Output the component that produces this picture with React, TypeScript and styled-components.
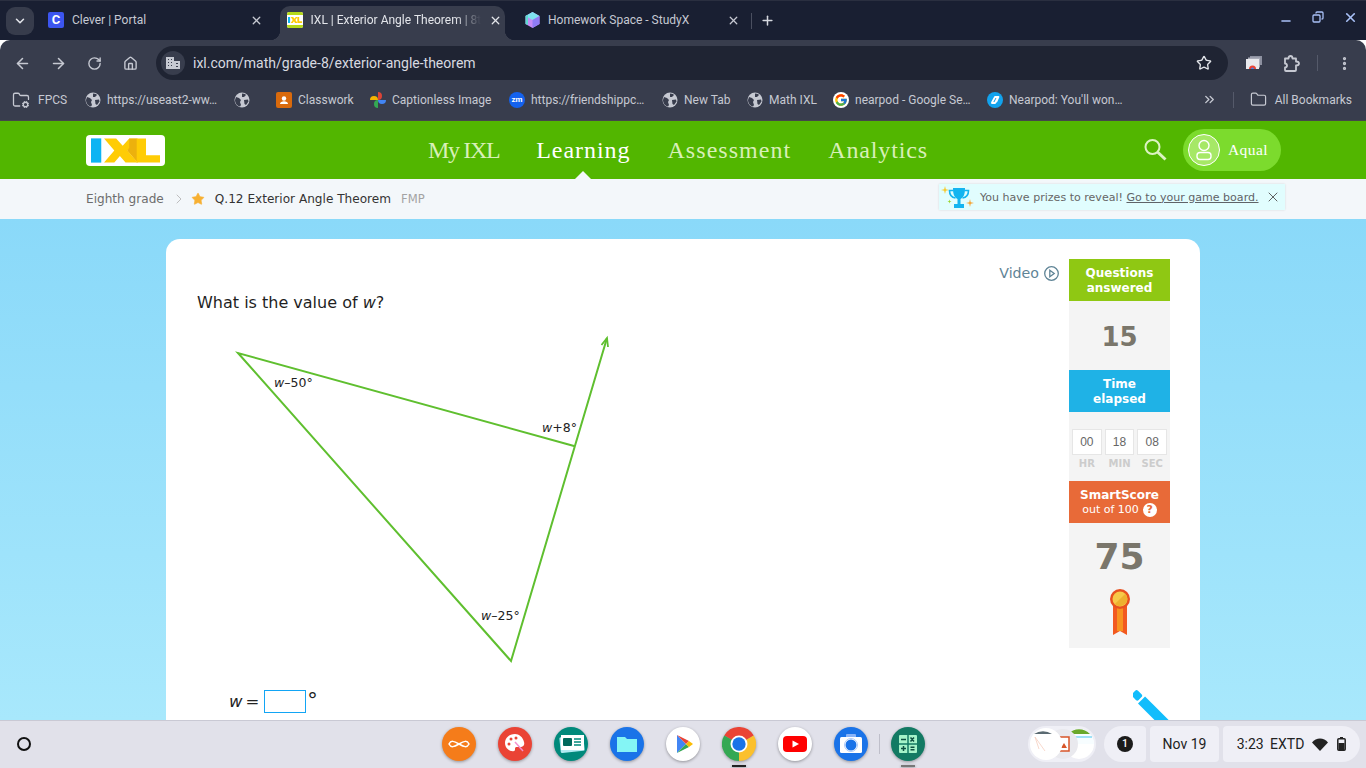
import React from "react";
import styled, { createGlobalStyle } from "styled-components";
import { ArrowLeft, ArrowRight, RotateCw, Home, Star, EllipsisVertical, X, Plus, Minus, ChevronDown, ChevronsRight, ChevronRight, Folder, FolderCog, Copy } from "lucide-react";
import { FcGoogle } from "react-icons/fc";

const Global = createGlobalStyle`
  html, body { margin: 0; padding: 0; overflow: hidden; background: #fff; }
  * { box-sizing: border-box; }
`;

const Screen = styled.div`
  width: 1366px; height: 768px; display: flex; flex-direction: column; overflow: hidden;
  font-family: Roboto, "Liberation Sans", sans-serif;
`;
const TabStrip = styled.div`
  height: 40px; flex: none; background: #191f32; border-top: 1px solid #2a2f40; display: flex; align-items: flex-end; padding-left: 6px; color: #c6c9d2;
`;
const TabMenu = styled.div`
  width: 28px; height: 28px; margin: 0 7px 5px 0; border-radius: 9px; background: #373c4c; display: flex; align-items: center; justify-content: center; color: #e3e5ea;
`;
const Tab = styled.div<{ $active?: boolean }>`
  position: relative; width: 225px; height: 34px; margin-right: 13.5px; padding: 0 3px 6px 7px; display: flex; align-items: center; gap: 8px; font-size: 12px; color: ${p => (p.$active ? "#e3e5ea" : "#c6c9d2")};
  background: ${p => (p.$active ? "#383d4d" : "transparent")}; border-radius: 10px 10px 0 0;
  ${p => p.$active && `
    &::before, &::after { content: ""; position: absolute; bottom: 0; width: 10px; height: 10px; }
    &::before { left: -10px; background: radial-gradient(circle at 0 0, transparent 10px, #383d4d 10.5px); }
    &::after { right: -10px; background: radial-gradient(circle at 100% 0, transparent 10px, #383d4d 10.5px); }
  `}
`;
const TabTitle = styled.span<{ $fade?: boolean }>`
  flex: 1; white-space: nowrap; overflow: hidden;
  ${p => p.$fade && `-webkit-mask-image: linear-gradient(90deg, #000 85%, transparent 100%);`}
`;
const Favicon = styled.span<{ $bg: string }>`
  width: 16px; height: 16px; flex: none; background: ${p => p.$bg}; border-radius: 2px; color: #fff; font: 700 13px/16px Roboto, sans-serif; text-align: center; display: inline-flex; align-items: center; justify-content: center; overflow: hidden;
`;
const TabDivider = styled.span`
  width: 1px; height: 16px; background: #4a4f60; margin: 0 8px 11px -5.5px;
`;
const NewTab = styled.div`
  margin-bottom: 12px; display: flex; color: #d5d8df;
`;
const WindowControls = styled.div`
  margin-left: auto; display: flex; gap: 16px; padding: 0 8px 15px 0; color: #a9c1f7;
`;
const WindowControl = styled.span`
  width: 16px; height: 16px; display: flex; align-items: center; justify-content: center;
`;
const Toolbar = styled.div`
  height: 41px; flex: none; background: #383d4d; border-radius: 10px 10px 0 0; display: flex; align-items: flex-start; padding: 6px 0 0 4px; color: #c6c9d2;
`;
const NavButton = styled.div`
  width: 36px; height: 34px; display: flex; align-items: center; justify-content: center;
`;
const AddressBar = styled.div`
  margin-left: 8px; width: 1072px; height: 34px; border-radius: 17px; background: #1f2433; display: flex; align-items: center; padding: 0 16px 0 5px; color: #d8dae0; font-size: 14px;
`;
const SiteBadge = styled.span`
  width: 24px; height: 24px; border-radius: 50%; background: #383d4d; display: flex; align-items: center; justify-content: center; margin-right: 8px;
`;
const UrlText = styled.span`
  flex: 1; padding-bottom: 1px;
`;
const ToolbarEnd = styled.div`
  display: flex; align-items: center; height: 34px; padding-left: 17px;
`;
const ToolbarIcon = styled.span<{ $w: number }>`
  width: ${p => p.$w}px; display: flex; justify-content: center; align-items: center;
`;
const ToolbarSep = styled.span`
  width: 1px; height: 16px; background: #555a6a; margin: 0 17px 0 -2px;
`;
const Bookmarks = styled.div`
  height: 40px; flex: none; background: #383d4d; display: flex; align-items: center; padding: 0 0 2px 12px; font-size: 12px; color: #c6c9d2; border-bottom: 1px solid #45464a;
`;
const Bookmark = styled.div<{ $gap?: number; $iconGap?: number }>`
  display: flex; align-items: center; gap: ${p => p.$iconGap ?? 6}px; white-space: nowrap; margin-right: ${p => p.$gap ?? 16}px;
`;
const BookmarkLabel = styled.span<{ $w: number }>`
  width: ${p => p.$w}px; display: block; white-space: nowrap;
`;
const BookmarksEnd = styled.div`
  margin-left: auto; display: flex; align-items: center; padding-right: 14px;
`;
const BookmarkSep = styled.span`
  width: 1px; height: 16px; background: #555a6a; margin: 0 16px;
`;
const IxlHeader = styled.header`
  height: 58px; flex: none; background: #52b600; display: flex; align-items: center; padding-left: 86px; position: relative;
`;
const LogoBox = styled.div`
  width: 79px; height: 31px; background: #fff; border-radius: 4px; display: flex; align-items: center; justify-content: center;
`;
const MainNav = styled.nav`
  margin-left: 263px; display: flex; gap: 37px;
`;
const NavItem = styled.a<{ $active?: boolean; $ls?: number }>`
  position: relative; font: 400 24px/30px "Liberation Serif", serif; letter-spacing: ${p => p.$ls ?? 0.95}px; color: ${p => (p.$active ? "#fff" : "#d8f0b8")};
  ${p => p.$active && `&::after { content: ""; position: absolute; left: 50%; margin-left: -8px; bottom: -14px; border: 8px solid transparent; border-top: 0; border-bottom-color: #f3f7fa; }`}
`;
const HeaderEnd = styled.div`
  margin-left: auto; display: flex; align-items: center; padding-right: 85px; color: #dcf3c2;
`;
const UserPill = styled.div`
  margin-left: 15px; width: 98px; height: 42px; border-radius: 21px; background: #7cdb2d; display: flex; align-items: center; padding-left: 5px; gap: 8px; font: 400 15.5px "Liberation Serif", serif; letter-spacing: 0.4px; color: #fff;
`;
const Avatar = styled.span`
  width: 32px; height: 32px; border-radius: 50%; border: 1px solid #fff; background: #a6e866; display: flex; align-items: center; justify-content: center;
`;
const SubBar = styled.div`
  height: 40px; flex: none; background: #f3f7fa; display: flex; align-items: center; padding-left: 86px; font: 12.1px "DejaVu Sans", Verdana, sans-serif; color: #333;
`;
const Crumb = styled.span`
  color: #6d6d6d;
`;
const CrumbSep = styled.span`
  display: flex; margin: 0 4px 0 7px; color: #b5b5b5;
`;
const CrumbStar = styled.span`
  display: flex; margin-right: 10px; color: #f7b032;
`;
const SkillCode = styled.span`
  margin-left: 10px; color: #a3a3a3; font-size: 11.6px;
`;
const Prize = styled.div`
  margin-left: auto; margin-right: 81px; margin-top: -4px; width: 346px; height: 26px; background: #e1fdfe; box-shadow: 0 0 2px rgba(0,0,0,.12); display: flex; align-items: center; font-size: 11.05px; color: #666;
`;
const PrizeText = styled.span`
  white-space: nowrap;
  a { text-decoration: underline; color: #5f6368; }
`;
const PrizeClose = styled.span`
  margin-left: 6px; display: flex; color: #555;
`;
const Page = styled.main`
  flex: 1; min-height: 0; overflow: hidden; background: linear-gradient(#8ad9f9, #a8e8fc); padding: 20px 166px 0;
`;
const Card = styled.section`
  position: relative; width: 1034px; min-height: 520px; background: #fff; border-radius: 14px 14px 0 0; display: flex; overflow: hidden;
`;
const Work = styled.div`
  width: 903px; flex: none; padding: 0 10px 0 31px; font-family: "DejaVu Sans", Verdana, sans-serif;
`;
const VideoLink = styled.div`
  height: 54px; padding-top: 14px; display: flex; justify-content: flex-end; align-items: center; gap: 5px; font-size: 14.2px; color: #5f8496;
`;
const Question = styled.div`
  font-size: 16px; line-height: 20px; color: #1f1f1f;
`;
const Diagram = styled.svg`
  display: block; margin: 15px 0 0 0;
`;
const Answer = styled.div`
  margin: 22px 0 0 32px; display: flex; align-items: center; font-size: 16.5px; color: #222; height: 23px;
`;
const EqualsSign = styled.span`
  margin-left: 3px;
`;
const AnswerBox = styled.span`
  width: 42px; height: 23px; border: 1.5px solid #12a5f5; margin: 0 1px 0 5px;
`;
const Degree = styled.span`
  font-size: 21px; line-height: 23px; align-self: flex-start;
`;
const Side = styled.aside`
  width: 101px; flex: none; padding-top: 20px; font-family: "DejaVu Sans", Verdana, sans-serif; text-align: center;
`;
const StatHead = styled.div<{ $bg: string }>`
  height: 42px; background: ${p => p.$bg}; color: #fff; font-weight: 700; font-size: 12px; line-height: 15px; padding: 7px 11px 0;
`;
const StatSub = styled.div`
  font-weight: 400; font-size: 11px; display: flex; align-items: center; justify-content: center; gap: 4px; margin: -1px -8px 0; white-space: nowrap;
`;
const HelpDot = styled.span`
  width: 14px; height: 14px; border-radius: 50%; background: #fff; color: #e86a38; font: 700 11px/14px "DejaVu Sans", sans-serif;
`;
const StatBody = styled.div<{ $h: number }>`
  height: ${p => p.$h}px; background: #f4f4f4; color: #7a766b;
`;
const BigNum = styled.div<{ $size: number; $pt: number }>`
  font-weight: 700; font-size: ${p => p.$size}px; line-height: 1; padding-top: ${p => p.$pt}px;
`;
const Timer = styled.div`
  display: flex; gap: 3px; padding: 17px 3px 0;
`;
const TimeCell = styled.div`
  flex: 1;
`;
const TimeValue = styled.div`
  height: 26px; background: #fff; border: 1px solid #e6e6e6; font: 12px/25px "Liberation Sans", Arial, sans-serif; color: #666;
`;
const TimeUnit = styled.div`
  font-weight: 700; font-size: 10px; color: #ccc; margin-top: 3px; line-height: 12px;
`;
const Medal = styled.svg`
  display: block; margin: 14px auto 0;
`;
const Pencil = styled.svg`
  position: absolute; left: 967px; top: 451px;
`;
const Shelf = styled.footer`
  height: 48px; flex: none; background: #e1e1ea; border-top: 1px solid #c9c9d4; display: grid; grid-template-columns: 1fr auto 1fr; align-items: center; padding: 0 6px 1px;
`;
const Launcher = styled.div`
  display: flex; padding-left: 11px;
`;
const Ring = styled.span`
  width: 14px; height: 14px; border: 2px solid #111; border-radius: 50%;
`;
const Apps = styled.div`
  display: flex; align-items: center; gap: 22px;
`;
const AppSlot = styled.div`
  position: relative; width: 34px; height: 34px; flex: none; filter: drop-shadow(0 1px 1.5px rgba(0,0,0,.35)); display: flex;
`;
const AppMark = styled.span<{ $dark?: boolean }>`
  position: absolute; left: 10px; bottom: -6px; width: 14px; height: 2px; background: ${p => (p.$dark ? "#222" : "#777")};
`;
const AppDivider = styled.span`
  width: 1px; height: 20px; background: #bfbfca; margin: 0 -11px;
`;
const Tray = styled.div`
  justify-self: end; display: flex; align-items: center; gap: 4px; font-size: 14px; color: #222;
`;
const Pods = styled.div`
  width: 68px; height: 36px; border-radius: 18px; background: #efeff6; margin-right: 4px; display: flex;
`;
const TrayChip = styled.div<{ $w: number; $l?: boolean; $r?: boolean }>`
  width: ${p => p.$w}px; height: 36px; background: #efeff6; display: flex; align-items: center; justify-content: center; gap: 8px; white-space: nowrap;
  border-radius: ${p => (p.$l ? 18 : 4)}px ${p => (p.$r ? 18 : 4)}px ${p => (p.$r ? 18 : 4)}px ${p => (p.$l ? 18 : 4)}px;
`;
const ClockText = styled.span`
  word-spacing: 3px;
`;
const NotifDot = styled.span`
  width: 16px; height: 16px; border-radius: 50%; background: #1b1b1b; color: #fff; font-size: 10.5px; line-height: 16px; text-align: center; font-weight: 500;
`;

const Globe = () => (
  <svg width="16" height="16" viewBox="0 0 16 16">
    <circle cx="8" cy="8" r="7.500" fill="#c6c9d2" />
    <path d="M2 5l3 1 2 2-1 2 1 3-1 1.500C3 14 1 11 1 8zM8 1.500l3 .5 1 1-2 2-2 0zM10 8l4-.5 .5 2-2.500 3.500-1.500-1z" fill="#383d4d" />
  </svg>
);
const IxlMark = ({ w, h }: { w: number; h: number }) => (
  <svg width={w} height={h} viewBox="0 0 74 26" aria-label="IXL logo">
    <rect x="0" y="0" width="11" height="26" fill="#0db4f3" />
    <polygon points="14,0 27,0 34,8 41,0 50,0 50,3 39,13 50,26 37,26 31,19 25,26 14,26 25,13" fill="#ffcc05" />
    <polygon points="49,0 59,0 59,18 74,18 74,26 49,26 49,17 50,26 39,13" fill="#ffcc05" />
    <polygon points="41,0 49,0 49,26 50,26 39,13 41,10" fill="#e6a810" opacity=".75" />
  </svg>
);
const TabIxl = () => (
  <Favicon $bg="#fff">
    <svg width="16" height="16" viewBox="0 0 16 16">
      <rect width="16" height="3" fill="#b6d91a" /><rect y="13" width="16" height="3" fill="#b6d91a" />
      <g transform="translate(1 5) scale(.19 .23)">
        <rect width="11" height="26" fill="#0db4f3" />
        <polygon points="14,0 27,0 34,8 41,0 50,0 39,13 50,26 37,26 31,19 25,26 14,26 25,13" fill="#ffcc05" />
        <polygon points="49,0 59,0 59,18 74,18 74,26 49,26" fill="#ffcc05" />
      </g>
    </svg>
  </Favicon>
);
const StudyCube = () => (
  <svg width="15" height="16" viewBox="0 0 15 16" style={{ flex: "none" }}>
    <polygon points="7.500,0 14.500,4 14.500,12 7.500,16 .5,12 .5,4" fill="#c58cf5" />
    <polygon points="7.500,0 14.500,4 7.500,8 .5,4" fill="#7fe3f0" />
    <polygon points="7.500,8 14.500,4 14.500,12 7.500,16" fill="#8f7cf5" />
    <polygon points=".5,4 3,3 3,13 .5,12" fill="#5fd9d0" />
  </svg>
);
const Pinwheel = () => (
  <svg width="16" height="16" viewBox="0 0 16 16">
    <path d="M0 8a4 4 0 0 1 8 0z" fill="#f4b400" />
    <path d="M8 0a4 4 0 0 1 0 8z" fill="#db4437" />
    <path d="M16 8a4 4 0 0 1-8 0z" fill="#4285f4" />
    <path d="M8 16a4 4 0 0 1 0-8z" fill="#34a853" />
  </svg>
);
const ZoomBadge = () => (
  <Favicon $bg="#1462ee" style={{ borderRadius: "50%", fontSize: 8 }}>zm</Favicon>
);
const NearpodBadge = () => (
  <svg width="16" height="16" viewBox="0 0 16 16">
    <circle cx="8" cy="8" r="8" fill="#12a3ee" />
    <path d="M5 10.500L8 5h3.500L9.500 9.500 11 5 8 11H5z" fill="none" stroke="#fff" strokeWidth="1.800" strokeLinejoin="round" />
  </svg>
);
const CastStack = () => (
  <svg width="16" height="14" viewBox="0 0 16 14">
    <rect x="4" y="0" width="12" height="9" fill="#8d91a0" />
    <rect x="2" y="1.500" width="12" height="10" fill="#a9acb8" />
    <rect x="0" y="3" width="13" height="10" fill="#e9eaee" />
    <path d="M3 13a3.500 3.500 0 0 1 7 0z" fill="#ea4335" /><path d="M5 13a1.500 1.500 0 0 1 3 0z" fill="#4285f4" />
  </svg>
);
const ExtensionIcon = () => (
  <svg width="17" height="17" viewBox="0 0 17 17" fill="none" stroke="currentColor" strokeWidth="1.800" strokeLinejoin="round">
    <path d="M2 3.500h3.500C5.500 1.500 6.500 1 7.500 1s2 .5 2 2.500H13V6.500c2 0 3 .8 3 2s-1 2-3 2V15a1 1 0 0 1-1 1H3a1 1 0 0 1-1-1v-2.500c1.500 0 2-.8 2-2s-.5-2-2-2z" />
  </svg>
);
const Classroom = () => (
  <Favicon $bg="#d96a0c">
    <svg width="16" height="16" viewBox="0 0 16 16">
      <circle cx="8" cy="6.500" r="2.200" fill="#fff" /><path d="M4 12c0-2 2-2.800 4-2.800s4 .8 4 2.800z" fill="#fff" />
    </svg>
  </Favicon>
);
const Trophy = () => (
  <svg width="41" height="26" viewBox="0 0 41 26" style={{ flex: "none" }}>
    <path d="M6 2l.8 3.200L10 6l-3.200.8L6 10l-.8-3.200L2 6l3.200-.8z" fill="#f7c92a" />
    <path d="M31 15l.7 3.300L35 19l-3.300.7L31 23l-.7-3.300L27 19l3.300-.7z" fill="#f7a02a" />
    <path d="M10.500 15.500l.5 1.500 1.500.5-1.500.5-.5 1.500-.5-1.500-1.500-.5 1.500-.5z" fill="#9bd42a" />
    <path d="M14 4h12c0 6-1 9-4.500 11v5H25v4H15v-4h3.500v-5C15 13 14 10 14 4z" fill="#14b4f0" />
    <path d="M14.500 6.500h-4c0 4.500 2 7 6 7.500M25.500 6.500h4c0 4.500-2 7-6 7.500" fill="none" stroke="#14b4f0" strokeWidth="1.600" />
  </svg>
);
const Chrome = () => (
  <svg width="34" height="34" viewBox="0 0 24 24">
    <path d="M12 12L1.600 6A12 12 0 0 1 22.400 6z" fill="#ea4335" />
    <path d="M12 12v12A12 12 0 0 1 1.600 6z" fill="#34a853" />
    <path d="M12 12L22.400 6A12 12 0 0 1 12 24z" fill="#fbc02d" />
    <circle cx="12" cy="12" r="6" fill="#fff" /><circle cx="12" cy="12" r="4.700" fill="#1a73e8" />
  </svg>
);
const Disc = ({ bg, children }: { bg: string; children?: React.ReactNode }) => (
  <svg width="34" height="34" viewBox="0 0 34 34">
    <circle cx="17" cy="17" r="17" fill={bg} />
    {children}
  </svg>
);
const tabClose = <X size={13} strokeWidth={2.4} style={{ flex: "none" }} />;
const labelStyle = { fontFamily: '"DejaVu Sans", Verdana, sans-serif', fontSize: 12.5, fill: "#222" } as const;

export default function App() {
  return (
    <Screen>
      <Global />
      <TabStrip>
        <TabMenu><ChevronDown size={14} strokeWidth={2.6} /></TabMenu>
        <Tab>
          <Favicon $bg="#3c55ef">C</Favicon>
          <TabTitle>Clever | Portal</TabTitle>
          {tabClose}
        </Tab>
        <Tab $active>
          <TabIxl />
          <TabTitle $fade>IXL | Exterior Angle Theorem | 8th grade math</TabTitle>
          {tabClose}
        </Tab>
        <Tab>
          <StudyCube />
          <TabTitle>Homework Space - StudyX</TabTitle>
          {tabClose}
        </Tab>
        <TabDivider />
        <NewTab><Plus size={15} strokeWidth={2.4} /></NewTab>
        <WindowControls>
          <WindowControl><Minus size={14} strokeWidth={2.4} style={{ marginTop: 8 }} /></WindowControl>
          <WindowControl><Copy size={12} strokeWidth={2.6} style={{ transform: "scaleX(-1)" }} /></WindowControl>
          <WindowControl><X size={15} strokeWidth={2.6} /></WindowControl>
        </WindowControls>
      </TabStrip>
      <Toolbar>
        <NavButton><ArrowLeft size={17} strokeWidth={2.2} /></NavButton>
        <NavButton><ArrowRight size={17} strokeWidth={2.2} /></NavButton>
        <NavButton><RotateCw size={15} strokeWidth={2.2} /></NavButton>
        <NavButton><Home size={15} strokeWidth={2.2} /></NavButton>
        <AddressBar>
          <SiteBadge>
            <svg width="14" height="12" viewBox="0 0 14 12"><path d="M0 0h8v12H0zM8 4h6v8H8z" fill="#c6c9d2" /><path d="M2 2h1v1H2zM5 2h1v1H5zM2 5h1v1H2zM5 5h1v1H5zM2 8h1v1H2zM5 8h1v1H5zM10 6h2v1h-2zM10 9h2v1h-2z" fill="#383d4d" /></svg>
          </SiteBadge>
          <UrlText>ixl.com/math/grade-8/exterior-angle-theorem</UrlText>
          <Star size={16} strokeWidth={2} color="#e3e5ea" />
        </AddressBar>
        <ToolbarEnd>
          <ToolbarIcon $w={18}><CastStack /></ToolbarIcon>
          <ToolbarIcon $w={56}><ExtensionIcon /></ToolbarIcon>
          <ToolbarSep />
          <ToolbarIcon $w={18}><EllipsisVertical size={17} strokeWidth={2.6} /></ToolbarIcon>
        </ToolbarEnd>
      </Toolbar>
      <Bookmarks>
        <Bookmark $iconGap={8}><FolderCog size={18} strokeWidth={1.7} /><BookmarkLabel $w={31}>FPCS</BookmarkLabel></Bookmark>
        <Bookmark><Globe /><BookmarkLabel $w={111}>https://useast2-ww…</BookmarkLabel></Bookmark>
        <Bookmark $gap={26}><Globe /></Bookmark>
        <Bookmark><Classroom /><BookmarkLabel $w={56}>Classwork</BookmarkLabel></Bookmark>
        <Bookmark><Pinwheel /><BookmarkLabel $w={101}>Captionless Image</BookmarkLabel></Bookmark>
        <Bookmark><ZoomBadge /><BookmarkLabel $w={115}>https://friendshippc…</BookmarkLabel></Bookmark>
        <Bookmark><Globe /><BookmarkLabel $w={47}>New Tab</BookmarkLabel></Bookmark>
        <Bookmark><Globe /><BookmarkLabel $w={48}>Math IXL</BookmarkLabel></Bookmark>
        <Bookmark><span style={{ display: "flex", background: "#fff", borderRadius: 8, padding: 1 }}><FcGoogle size={14} /></span><BookmarkLabel $w={116}>nearpod - Google Se…</BookmarkLabel></Bookmark>
        <Bookmark><NearpodBadge /><BookmarkLabel $w={116}>Nearpod: You'll won…</BookmarkLabel></Bookmark>
        <BookmarksEnd>
          <ChevronsRight size={15} strokeWidth={2.2} />
          <BookmarkSep />
          <Bookmark $gap={0} $iconGap={8}><Folder size={17} strokeWidth={1.7} />All Bookmarks</Bookmark>
        </BookmarksEnd>
      </Bookmarks>
      <IxlHeader>
        <LogoBox><IxlMark w={69} h={25} /></LogoBox>
        <MainNav>
          <NavItem $ls={-1.35}>My IXL</NavItem>
          <NavItem $active>Learning</NavItem>
          <NavItem $ls={1.05}>Assessment</NavItem>
          <NavItem $ls={0.85}>Analytics</NavItem>
        </MainNav>
        <HeaderEnd>
          <svg width="26" height="26" viewBox="0 0 26 26" fill="none" stroke="currentColor"><circle cx="10.500" cy="10" r="7" strokeWidth="2" /><path d="M15.500 15l8 7.500" strokeWidth="3" /></svg>
          <UserPill>
            <Avatar>
              <svg width="20" height="22" viewBox="0 0 20 22" fill="none" stroke="#fff" strokeWidth="1.400"><circle cx="10" cy="6.500" r="5" /><rect x="3" y="13.500" width="14" height="7" rx="3" /></svg>
            </Avatar>
            Aqual
          </UserPill>
        </HeaderEnd>
      </IxlHeader>
      <SubBar>
        <Crumb>Eighth grade</Crumb>
        <CrumbSep><ChevronRight size={16} strokeWidth={1.3} /></CrumbSep>
        <CrumbStar><Star size={14} fill="#f7b032" strokeWidth={1} /></CrumbStar>
        Q.12 Exterior Angle Theorem
        <SkillCode>FMP</SkillCode>
        <Prize>
          <Trophy />
          <PrizeText>You have prizes to reveal! <a>Go to your game board.</a></PrizeText>
          <PrizeClose><X size={16} strokeWidth={1.4} /></PrizeClose>
        </Prize>
      </SubBar>
      <Page>
        <Card>
          <Work>
            <VideoLink>
              Video
              <svg width="15" height="15" viewBox="0 0 15 15" fill="none" stroke="#5f8496" strokeWidth="1.300"><circle cx="7.500" cy="7.500" r="6.800" /><path d="M5.800 4.300l4.400 3.200-4.400 3.200z" /></svg>
            </VideoLink>
            <Question>What is the value of <i>w</i>?</Question>
            <Diagram width="440" height="340" viewBox="197 328 440 340">
              <g fill="none" stroke="#5fbf2f" strokeWidth="2">
                <polyline points="574,446 238,353 511,661 607,338" />
                <polyline points="601.500,345 607,338 608,347" strokeWidth="1.800" />
              </g>
              <text x="274" y="387" style={labelStyle}><tspan fontStyle="italic">w</tspan>–50°</text>
              <text x="542" y="432" style={labelStyle}><tspan fontStyle="italic">w</tspan>+8°</text>
              <text x="481" y="620" style={labelStyle}><tspan fontStyle="italic">w</tspan>–25°</text>
            </Diagram>
            <Answer>
              <i>w</i>
              <EqualsSign>=</EqualsSign>
              <AnswerBox />
              <Degree>°</Degree>
            </Answer>
          </Work>
          <Side>
            <StatHead $bg="#8fc813">Questions answered</StatHead>
            <StatBody $h={69}><BigNum $size={26} $pt={23}>15</BigNum></StatBody>
            <StatHead $bg="#1fb2e6">Time elapsed</StatHead>
            <StatBody $h={69}>
              <Timer>
                <TimeCell><TimeValue>00</TimeValue><TimeUnit>HR</TimeUnit></TimeCell>
                <TimeCell><TimeValue>18</TimeValue><TimeUnit>MIN</TimeUnit></TimeCell>
                <TimeCell><TimeValue>08</TimeValue><TimeUnit>SEC</TimeUnit></TimeCell>
              </Timer>
            </StatBody>
            <StatHead $bg="#e86a38">
              SmartScore
              <StatSub>out of 100 <HelpDot>?</HelpDot></StatSub>
            </StatHead>
            <StatBody $h={125}>
              <BigNum $size={36} $pt={16}>75</BigNum>
              <Medal width="22" height="46" viewBox="0 0 22 46">
                <path d="M4 14h14v32l-7-4-7 4z" fill="#f2591f" />
                <rect x="8" y="14" width="6" height="28" fill="#f8921e" />
                <circle cx="11" cy="10" r="10" fill="#e8501f" />
                <circle cx="11" cy="10" r="7.500" fill="#f7c948" />
                <path d="M5.700 15.300L16.300 4.700A7.500 7.500 0 0 1 5.700 15.300z" fill="#eeb02e" />
              </Medal>
            </StatBody>
          </Side>
          <Pencil width="38" height="34" viewBox="0 0 38 34">
            <g transform="rotate(45 5 5)" fill="#12bdfc">
              <rect x="0" y="2" width="9" height="8" rx="2" />
              <rect x="11" y="1" width="40" height="10" />
            </g>
          </Pencil>
        </Card>
      </Page>
      <Shelf>
        <Launcher><Ring /></Launcher>
        <Apps>
          <AppSlot>
            <Disc bg="#f57c1a"><path d="M7 17c2-4 5-3 10 0s8 4 10 0c-2-4-5-3-10 0s-8 4-10 0z" fill="none" stroke="#fff" strokeWidth="1.500" /></Disc>
          </AppSlot>
          <AppSlot>
            <Disc bg="#ea4335">
              <path d="M17 7c-6 0-10 4-10 9 0 6 6 9 9 8 2-.6 0-3 2-4h4c3 0 5-2 4-5-1-5-5-8-9-8z" fill="#fff" />
              <circle cx="13" cy="12" r="1.500" fill="#ea4335" /><circle cx="18" cy="11" r="1.500" fill="#ea4335" /><circle cx="11" cy="17" r="1.500" fill="#ea4335" />
              <path d="M17 15l8 9" stroke="#f48fd0" strokeWidth="1.500" />
            </Disc>
          </AppSlot>
          <AppSlot>
            <Disc bg="#00897b">
              <rect x="6" y="9" width="24" height="16" rx="1.500" fill="#b2ebf2" transform="rotate(-6 18 17)" />
              <rect x="7" y="8" width="23" height="15" fill="#fff" />
              <rect x="9" y="11" width="9" height="8" rx="1" fill="#00695c" />
              <path d="M20 12h7M20 15h7M20 18h7" stroke="#00897b" strokeWidth="1.500" />
            </Disc>
          </AppSlot>
          <AppSlot>
            <Disc bg="#1a73e8">
              <path d="M7 10h8l2 2h10v13H7z" fill="#84f5f5" />
            </Disc>
          </AppSlot>
          <AppSlot>
            <Disc bg="#fff">
              <path d="M11 8v18l9-9z" fill="#4285f4" />
              <path d="M11 8l9 9 3-3z" fill="#ea4335" />
              <path d="M11 26l9-9 3 3z" fill="#34a853" />
              <path d="M23 14l4 3-4 3-3-3z" fill="#fbbc04" />
            </Disc>
          </AppSlot>
          <AppSlot>
            <Chrome />
            <AppMark $dark />
          </AppSlot>
          <AppSlot>
            <Disc bg="#fff">
              <rect x="5" y="9" width="24" height="16" rx="4" fill="#f00" />
              <path d="M14.500 13.500l6.500 3.500-6.500 3.500z" fill="#fff" />
            </Disc>
          </AppSlot>
          <AppSlot>
            <Disc bg="#1a73e8">
              <rect x="12" y="7" width="10" height="4" rx="1" fill="#8ab4f8" />
              <rect x="6" y="10" width="22" height="16" rx="1.500" fill="#fff" />
              <circle cx="17" cy="18" r="5.500" fill="#1a73e8" />
              <circle cx="17" cy="18" r="6.500" fill="none" stroke="#aecbfa" strokeWidth="1" />
            </Disc>
          </AppSlot>
          <AppDivider />
          <AppSlot>
            <Disc bg="#137a63">
              <rect x="8" y="8" width="18" height="18" rx="1" fill="#a5f3c9" />
              <path d="M17 8v18M8 17h18" stroke="#137a63" strokeWidth="1.500" />
              <path d="M10 12.500h5M19.500 10.500l3.500 4M23 10.500l-3.500 4M12.500 19v5M10 21.500h5M19.500 20.300h4M19.500 22.700h4" stroke="#0d4f41" strokeWidth="1.500" />
            </Disc>
            <AppMark />
          </AppSlot>
        </Apps>
        <Tray>
          <Pods>
            <svg width="68" height="36" viewBox="0 0 68 36">
              <circle cx="51" cy="18" r="15" fill="#fff" />
              <path d="M36 18a15 15 0 0 1 30 0z" fill="#f7fdff" /><path d="M40 8a15 15 0 0 1 22 0z" fill="#6aa82a" />
              <rect x="42" y="10" width="22" height="2" fill="#9fe1f7" />
              <circle cx="35" cy="18" r="15" fill="#e9e9ee" />
              <rect x="31" y="11" width="10" height="14" fill="#fff" stroke="#d8562a" strokeWidth="1.500" />
              <path d="M33 22l3-5 3 5z" fill="#d8562a" />
              <circle cx="18" cy="18" r="16" fill="#fff" />
              <path d="M6 8h18a16 16 0 0 0-18 0z" fill="#5a6a72" />
              <path d="M7 11l10 14M7 11l4 12" stroke="#f5c8b8" strokeWidth=".7" fill="none" />
            </svg>
          </Pods>
          <TrayChip $w={42} $l><NotifDot>1</NotifDot></TrayChip>
          <TrayChip $w={69}>Nov 19</TrayChip>
          <TrayChip $w={137} $r>
            <ClockText>3:23 EXTD</ClockText>
            <svg width="16" height="13" viewBox="0 0 16 13"><path d="M0 4.500C4-.8 12-.8 16 4.500L8 13z" fill="#222" /></svg>
            <svg width="9" height="14" viewBox="0 0 9 14" style={{ marginLeft: 1 }}><rect x="3" width="3" height="2" fill="#222" /><rect x=".8" y="1.800" width="7.400" height="11.400" rx="1" fill="none" stroke="#222" strokeWidth="1.500" /><rect x="1.500" y="6" width="6" height="7" fill="#222" /></svg>
          </TrayChip>
        </Tray>
      </Shelf>
    </Screen>
  );
}
